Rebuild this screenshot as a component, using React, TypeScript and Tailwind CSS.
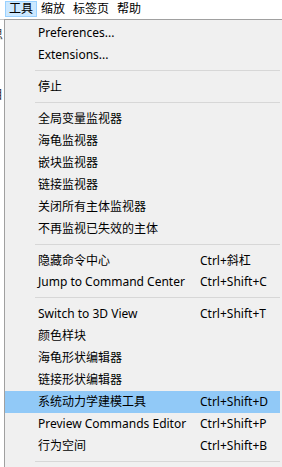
import React from "react";

type Item =
  | { type: "item"; label: string; shortcut?: string; active?: boolean }
  | { type: "sep" };

const items: Item[] = [
  { type: "item", label: "Preferences..." },
  { type: "item", label: "Extensions..." },
  { type: "sep" },
  { type: "item", label: "停止" },
  { type: "sep" },
  { type: "item", label: "全局变量监视器" },
  { type: "item", label: "海龟监视器" },
  { type: "item", label: "嵌块监视器" },
  { type: "item", label: "链接监视器" },
  { type: "item", label: "关闭所有主体监视器" },
  { type: "item", label: "不再监视已失效的主体" },
  { type: "sep" },
  { type: "item", label: "隐藏命令中心", shortcut: "Ctrl+斜杠" },
  { type: "item", label: "Jump to Command Center", shortcut: "Ctrl+Shift+C" },
  { type: "sep" },
  { type: "item", label: "Switch to 3D View", shortcut: "Ctrl+Shift+T" },
  { type: "item", label: "颜色样块" },
  { type: "item", label: "海龟形状编辑器" },
  { type: "item", label: "链接形状编辑器" },
  { type: "item", label: "系统动力学建模工具", shortcut: "Ctrl+Shift+D", active: true },
  { type: "item", label: "Preview Commands Editor", shortcut: "Ctrl+Shift+P" },
  { type: "item", label: "行为空间", shortcut: "Ctrl+Shift+B" },
  { type: "sep" },
];

const bar = ["工具", "缩放", "标签页", "帮助"];

export default function App() {
  return (
    <div
      className="w-[282px] h-[467px] bg-white overflow-hidden flex flex-col text-[12px] text-black"
      style={{ fontFamily: "'Noto Sans', 'Noto Sans CJK SC', sans-serif" }}
    >
      <div className="h-[19px] shrink-0 flex items-start pl-[5px] pt-[1px] bg-white">
        {bar.map((b, i) => (
          <div
            key={b}
            className={
              i === 0
                ? "h-[16px] px-[3px] border border-[#99d1ff] bg-[#cce8ff] leading-[14px]"
                : "h-[16px] px-[3px] border border-transparent leading-[14px]"
            }
          >
            {b}
          </div>
        ))}
      </div>
      <div className="flex flex-1 min-h-0">
        <div className="w-[4px] shrink-0 border-t border-[#c8c8c8] overflow-hidden flex flex-col">
          <div className="h-[8px]" />
          <div className="-ml-[9px] leading-[14px] text-[12px] text-[#333]">思</div>
          <div className="h-[46px]" />
          <div className="-ml-[9px] leading-[14px] text-[12px] text-[#333]">目</div>
        </div>
        <div className="flex-1 bg-[#f0f0f0] border-l border-t border-[#a0a0a0] pt-[2px] pl-0 pr-[2px] flex flex-col">
          {items.map((it, i) =>
            it.type === "sep" ? (
              <div key={i} className="h-[10px] pt-[4px] pl-[30px]">
                <div className="h-[1px] bg-[#d7d7d7]" />
              </div>
            ) : (
              <div
                key={i}
                className={
                  it.active
                    ? "h-[22px] flex items-center bg-[#91c9f7]"
                    : "h-[22px] flex items-center"
                }
              >
                <div className="w-[195px] pl-[33px] whitespace-nowrap">{it.label}</div>
                {it.shortcut && <div className="whitespace-nowrap">{it.shortcut}</div>}
              </div>
            )
          )}
        </div>
      </div>
    </div>
  );
}
